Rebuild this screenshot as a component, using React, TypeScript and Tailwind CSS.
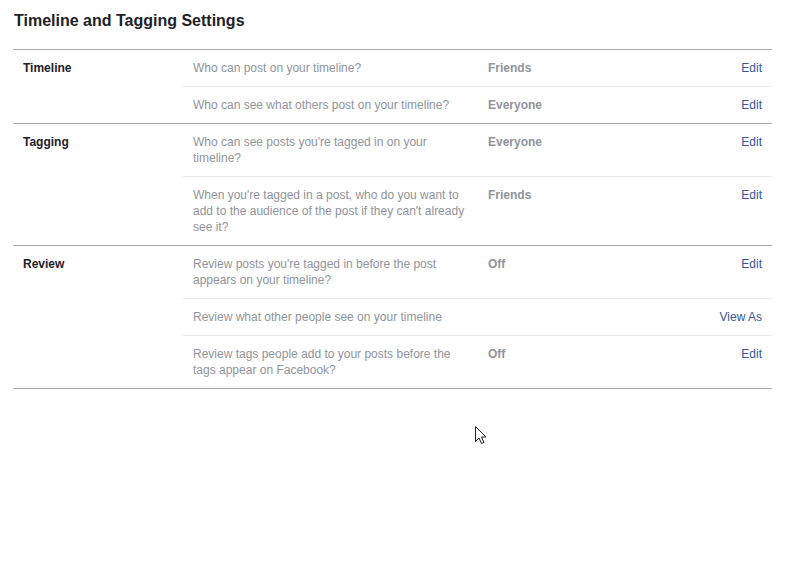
import React from 'react';

interface SettingRow {
  question: string;
  value?: string;
  action: string;
}

interface Section {
  title: string;
  rows: SettingRow[];
}

const sections: Section[] = [
  {
    title: 'Timeline',
    rows: [
      { question: 'Who can post on your timeline?', value: 'Friends', action: 'Edit' },
      { question: 'Who can see what others post on your timeline?', value: 'Everyone', action: 'Edit' },
    ],
  },
  {
    title: 'Tagging',
    rows: [
      { question: "Who can see posts you're tagged in on your timeline?", value: 'Everyone', action: 'Edit' },
      {
        question: "When you're tagged in a post, who do you want to add to the audience of the post if they can't already see it?",
        value: 'Friends',
        action: 'Edit',
      },
    ],
  },
  {
    title: 'Review',
    rows: [
      { question: "Review posts you're tagged in before the post appears on your timeline?", value: 'Off', action: 'Edit' },
      { question: 'Review what other people see on your timeline', action: 'View As' },
      { question: 'Review tags people add to your posts before the tags appear on Facebook?', value: 'Off', action: 'Edit' },
    ],
  },
];

const Cursor = () => (
  <svg className="absolute left-[475px] top-[426px]" width="12" height="19" viewBox="0 0 12 19">
    <path
      d="M0.5 0.5 L0.5 15.5 L4 12 L6.5 17.5 L9 16.5 L6.5 11 L11 11 Z"
      fill="#fff"
      stroke="#222"
      strokeWidth="1"
      strokeLinejoin="miter"
    />
  </svg>
);

export default function App() {
  return (
    <div className="relative w-[790px] h-[579px] bg-white font-['Liberation_Sans',Arial,sans-serif] text-[12px] leading-4">
      <h2 className="pl-[14px] pt-[11px] pb-[18px] text-[16px] leading-[20px] font-bold text-[#1d2129]">
        Timeline and Tagging Settings
      </h2>
      <div className="ml-[13px] w-[759px] border-b border-[#aaa]">
        {sections.map((section) => (
          <div key={section.title} className="flex border-t border-[#aaa]">
            <div className="w-[170px] shrink-0 py-[10px] pl-[10px] font-bold text-[#1d2129]">{section.title}</div>
            <div className="flex-1">
              {section.rows.map((row, i) => (
                <div
                  key={row.question}
                  className={`flex py-[10px] ${i > 0 ? 'border-t border-[#e9ebee]' : ''}`}
                >
                  <div className="w-[305px] shrink-0 pl-[10px] pr-[13px] text-[#90949c]">{row.question}</div>
                  <div className="flex-1 font-bold text-[#90949c]">{row.value}</div>
                  <div className="pr-[10px] text-[#365899]">{row.action}</div>
                </div>
              ))}
            </div>
          </div>
        ))}
      </div>
      <Cursor />
    </div>
  );
}
